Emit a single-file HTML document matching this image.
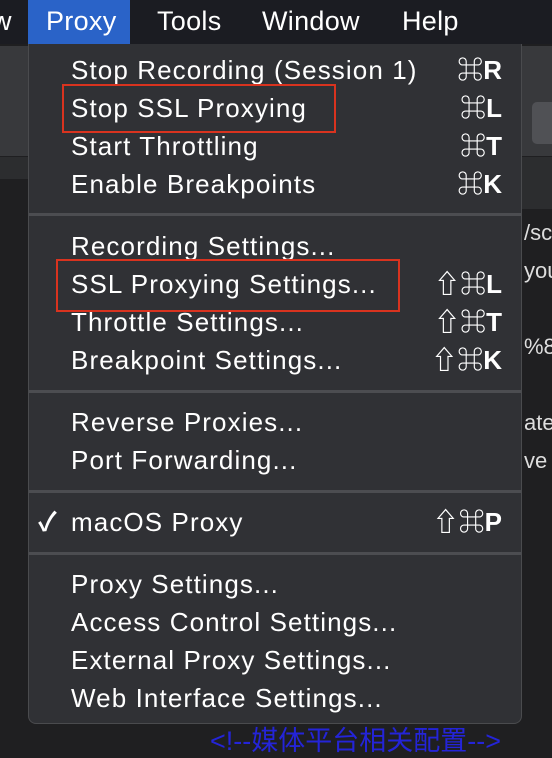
<!DOCTYPE html>
<html><head><meta charset="utf-8"><style>
body{margin:0;width:552px;height:748px;overflow:hidden;background:#1f1f21;position:relative;font-family:"Liberation Sans","Noto Sans CJK SC",sans-serif;}
.bar{position:absolute;left:0;top:0;width:552px;height:44px;background:#1b1c22;color:#fff;font-size:27px;letter-spacing:0.3px;}
.bar span{position:absolute;top:6px;}
.hl{position:absolute;left:28px;top:0;width:102px;height:44px;background:#2a63c8;}
.bg1{position:absolute;left:0;top:46px;width:28px;height:110px;background:#38393c;}
.bg2{position:absolute;left:0;top:157px;width:28px;height:22px;background:#2c2d2f;}
.bgr{position:absolute;left:522px;top:46px;width:30px;height:110px;background:#38393c;}
.bgr2{position:absolute;left:522px;top:157px;width:30px;height:52px;background:#2c2d2f;}
.menu{position:absolute;left:28px;top:44px;width:494px;height:680px;background:#303135;border-radius:0 0 8px 8px;border:1px solid #4a4b4e;border-top:none;box-sizing:border-box;}
.it{position:absolute;left:71px;color:#fff;font-size:26px;letter-spacing:1.1px;line-height:30px;white-space:nowrap;}
.sc{position:absolute;right:50px;color:#fff;font-size:26px;line-height:30px;text-align:right;font-weight:bold;}
.sep{position:absolute;left:29px;width:492px;height:3px;background:#4c4d51;}
.box{position:absolute;border:2px solid #d9331f;}
.rt{position:absolute;left:524px;color:#ddd;font-size:22px;}
</style></head><body>
<div class="bg1"></div><div class="bg2"></div><div class="bgr"></div><div class="bgr2"></div>
<div style="position:absolute;left:532px;top:102px;width:20px;height:42px;background:#505155;border-radius:5px 0 0 5px"></div>
<span class="rt" style="top:220px">/sc</span>
<span class="rt" style="top:258px">you</span>
<span class="rt" style="top:334px">%8</span>
<span class="rt" style="top:410px">ate</span>
<span class="rt" style="top:448px">ve</span>
<div style="position:absolute;left:210px;top:719px;color:#2424d8;font-size:27px;">&lt;!--媒体平台相关配置--&gt;</div>
<div class="bar"><div class="hl"></div>
<span style="left:-8px">w</span><span style="left:46px">Proxy</span><span style="left:157px">Tools</span><span style="left:262px">Window</span><span style="left:402px">Help</span></div>
<div class="menu"></div>
<div class="it" style="top:55px">Stop Recording (Session 1)</div><div class="sc" style="top:55px">⌘R</div>
<div class="it" style="top:93px">Stop SSL Proxying</div><div class="sc" style="top:93px">⌘L</div>
<div class="it" style="top:131px">Start Throttling</div><div class="sc" style="top:131px">⌘T</div>
<div class="it" style="top:169px">Enable Breakpoints</div><div class="sc" style="top:169px">⌘K</div>
<div class="sep" style="top:213px"></div>
<div class="it" style="top:231px">Recording Settings...</div>
<div class="it" style="top:269px">SSL Proxying Settings...</div><div class="sc" style="top:269px">⇧⌘L</div>
<div class="it" style="top:307px">Throttle Settings...</div><div class="sc" style="top:307px">⇧⌘T</div>
<div class="it" style="top:345px">Breakpoint Settings...</div><div class="sc" style="top:345px">⇧⌘K</div>
<div class="sep" style="top:390px"></div>
<div class="it" style="top:407px">Reverse Proxies...</div>
<div class="it" style="top:445px">Port Forwarding...</div>
<div class="sep" style="top:490px"></div>
<div class="it" style="top:507px;left:38px;font-weight:bold">✓</div>
<div class="it" style="top:507px">macOS Proxy</div><div class="sc" style="top:507px">⇧⌘P</div>
<div class="sep" style="top:552px"></div>
<div class="it" style="top:569px">Proxy Settings...</div>
<div class="it" style="top:607px">Access Control Settings...</div>
<div class="it" style="top:645px">External Proxy Settings...</div>
<div class="it" style="top:683px">Web Interface Settings...</div>
<div class="box" style="left:62px;top:84px;width:270px;height:45px"></div>
<div class="box" style="left:56px;top:259px;width:340px;height:49px"></div>
</body></html>
